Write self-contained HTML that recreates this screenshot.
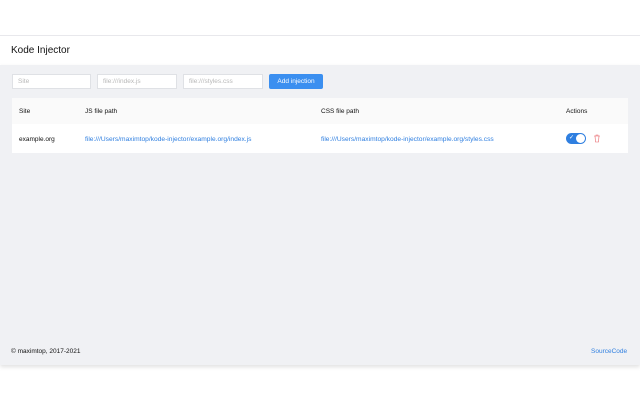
<!DOCTYPE html>
<html><head><style>
body{margin:0;width:640px;height:400px;background:#fff;font-family:"Liberation Sans",sans-serif;position:relative;overflow:hidden}
.top{position:absolute;left:0;top:0;width:640px;height:35px;background:#fff;border-bottom:1px solid #e8e8ec}
.hdr{position:absolute;left:0;top:36px;width:640px;height:29px;background:#fff}
.hdr span{position:absolute;left:11px;top:9px;font-size:10px;color:#111}
.main{position:absolute;left:0;top:65px;width:640px;height:300px;background:#f0f1f4;box-shadow:0 2px 4px rgba(0,0,0,.12)}
.in{position:absolute;top:9px;height:13px;background:#fff;border:1px solid #dfe1e5;font-size:6.5px;color:#b8b8b8;line-height:13px;padding-left:5px;box-sizing:content-box}
.btn{position:absolute;left:269px;top:9px;width:54px;height:15px;background:#3b8ff0;border-radius:2px;color:#fff;font-size:6.5px;line-height:15px;text-align:center}
.tbl{position:absolute;left:12px;top:33px;width:616px;height:55px;background:#fff}
.th{position:absolute;left:0;top:0;width:616px;height:26px;background:#fafafa}
.t{position:absolute;font-size:6.5px;color:#111}
.l{color:#2f7fe0;font-size:6.65px}
.ft{position:absolute;top:283px;font-size:6.5px}
</style></head><body>
<div class="top"></div>
<div class="hdr"><span>Kode Injector</span></div>
<div class="main">
<div class="in" style="left:12px;width:72px">Site</div>
<div class="in" style="left:97px;width:73px">file:///index.js</div>
<div class="in" style="left:183px;width:73px">file:///styles.css</div>
<div class="btn">Add injection</div>
<div class="tbl">
<div class="th"></div>
<div class="t" style="left:7px;top:10px">Site</div>
<div class="t" style="left:73px;top:10px">JS file path</div>
<div class="t" style="left:309px;top:10px">CSS file path</div>
<div class="t" style="left:554px;top:10px">Actions</div>
<div class="t" style="left:7px;top:38px">example.org</div>
<div class="t l" style="left:73px;top:38px">file:///Users/maximtop/kode-injector/example.org/index.js</div>
<div class="t l" style="left:309px;top:38px">file:///Users/maximtop/kode-injector/example.org/styles.css</div>
<div style="position:absolute;left:554px;top:35px;width:20px;height:11px;border-radius:6px;background:#2f7fe0"><span style="position:absolute;left:3px;top:0;color:#fff;font-size:6px;line-height:11px">✓</span><div style="position:absolute;right:1px;top:1px;width:9px;height:9px;border-radius:50%;background:#fff"></div></div>
<svg style="position:absolute;left:581px;top:36px" width="8" height="9" viewBox="0 0 8 9"><path d="M1 2h6M3 2V1h2v1M2 2l.5 6h3L6 2" fill="none" stroke="#e8666a" stroke-width=".6"/></svg>
</div>
<div class="ft" style="left:11px;color:#111">© maximtop, 2017-2021</div>
<div class="ft l" style="left:591px;font-size:6.5px">SourceCode</div>
</div>
</body></html>
